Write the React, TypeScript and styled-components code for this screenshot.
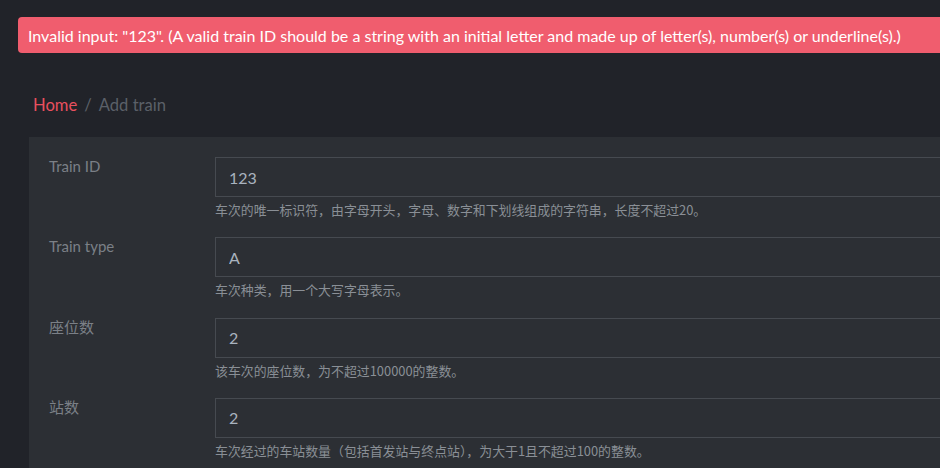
import styled, { createGlobalStyle } from "styled-components";

const GlobalStyle = createGlobalStyle`
  html, body {
    margin: 0;
    padding: 0;
    background: #212329;
    overflow: hidden;
  }
  body {
    font-family: Lato, "Noto Sans CJK SC", sans-serif;
  }
`;

const Page = styled.div`
  width: 940px;
  height: 468px;
  overflow: hidden;
  background: #212329;
`;

const Toast = styled.div`
  margin: 17px 0 0 18px;
  height: 36px;
  display: flex;
  align-items: center;
  padding-left: 10px;
  background: #f05d6e;
  color: #ffffff;
  font-size: 16px;
  border-radius: 4px 0 0 4px;
  white-space: nowrap;
`;

const Breadcrumb = styled.nav`
  display: flex;
  align-items: center;
  gap: 7px;
  margin: 40px 0 0 33px;
  height: 24px;
  font-size: 16.6px;
`;

const Crumb = styled.span<{ active?: boolean }>`
  color: ${({ active }) => (active ? "#e8505f" : "#5b6068")};
`;

const Panel = styled.div`
  margin: 20px 0 0 29px;
  padding: 20px 0 20px 20px;
  background: #2c2f34;
  min-height: 400px;
`;

const Row = styled.div`
  display: grid;
  grid-template-columns: 166px 1fr;
  margin-bottom: 18.3px;
`;

const Label = styled.label`
  color: #7b8087;
  font-size: 15px;
  line-height: 18px;
`;

const Field = styled.div`
  display: flex;
  flex-direction: column;
`;

const Input = styled.input`
  box-sizing: border-box;
  width: 100%;
  height: 40px;
  border: 1px solid #464a50;
  border-right: none;
  background: #2c2f34;
  color: #a9b3bf;
  font-family: inherit;
  font-size: 16px;
  padding: 0 13px;
  outline: none;
`;

const Help = styled.div`
  margin-top: 4px;
  font-size: 12.9px;
  line-height: 18px;
  color: #8a8f96;
  font-family: "Noto Sans CJK SC", sans-serif;
`;

const fields = [
  { label: "Train ID", value: "123", help: "车次的唯一标识符，由字母开头，字母、数字和下划线组成的字符串，长度不超过20。" },
  { label: "Train type", value: "A", help: "车次种类，用一个大写字母表示。" },
  { label: "座位数", value: "2", help: "该车次的座位数，为不超过100000的整数。" },
  { label: "站数", value: "2", help: "车次经过的车站数量（包括首发站与终点站），为大于1且不超过100的整数。" },
];

export default function App() {
  return (
    <Page>
      <GlobalStyle />
      <Toast>
        Invalid input: "123". (A valid train ID should be a string with an initial letter and made up of letter(s), number(s) or underline(s).)
      </Toast>
      <Breadcrumb>
        <Crumb active>Home</Crumb>
        <Crumb>/</Crumb>
        <Crumb>Add train</Crumb>
      </Breadcrumb>
      <Panel>
        {fields.map((f) => (
          <Row key={f.label}>
            <Label>{f.label}</Label>
            <Field>
              <Input defaultValue={f.value} />
              <Help>{f.help}</Help>
            </Field>
          </Row>
        ))}
      </Panel>
    </Page>
  );
}
